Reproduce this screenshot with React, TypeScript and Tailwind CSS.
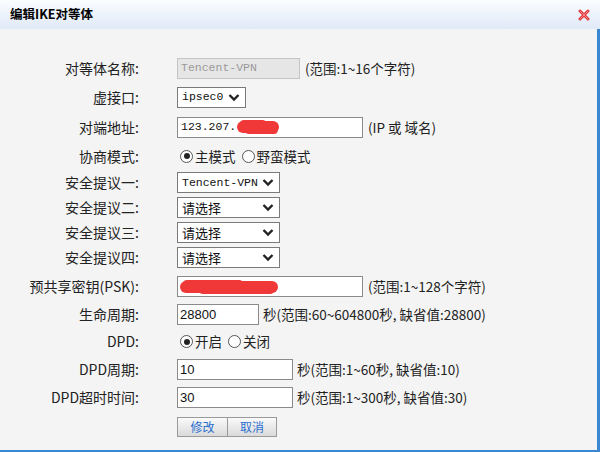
import React from "react";

const cjk = { fontFamily: '"Noto Sans CJK SC", "Liberation Sans", sans-serif' };
const mono = { fontFamily: '"Liberation Mono", "Noto Sans CJK SC", monospace' };
const sans = { fontFamily: '"Liberation Sans", "Noto Sans CJK SC", sans-serif' };

function Chevron() {
	return (
		<svg width="12" height="9" viewBox="0 0 12 9" className="shrink-0">
			<polyline points="1.5,2 6,6.5 10.5,2" fill="none" stroke="#222" strokeWidth="2.4" />
		</svg>
	);
}

function Select({ value, width, isMono }: { value: string; width: string; isMono?: boolean }) {
	return (
		<div
			className={`flex h-[21px] items-center justify-between border border-[#7a7a7a] bg-white pl-[4px] pr-[5px] text-[13px] text-[#111] ${width}`}
		>
			<span style={isMono ? { ...mono, fontSize: "11.5px" } : cjk}>{value}</span>
			<Chevron />
		</div>
	);
}

function Radio({ checked, label }: { checked?: boolean; label: string }) {
	return (
		<label className="flex items-center gap-[2px]">
			<span className="flex h-[13px] w-[13px] items-center justify-center rounded-full border border-[#555] bg-white">
				{checked && <span className="h-[6px] w-[6px] rounded-full bg-[#222]" />}
			</span>
			<span className="text-[13.5px] text-[#222]">{label}</span>
		</label>
	);
}

// red marker strokes that hide the address and the key
function Scribble({ w }: { w: number }) {
	return (
		<svg width={w} height="16" viewBox={`0 0 ${w} 16`} className="block shrink-0">
			<rect x="1" y="2" width={w - 2} height="12" rx="6" fill="#f03838" />
			<rect x="4" y="1" width={w * 0.6} height="8" rx="4" fill="#f03838" />
			<rect x={w * 0.2} y="7" width={w * 0.75} height="8" rx="4" fill="#f03838" />
		</svg>
	);
}

function Row({ label, h, children }: { label: string; h: string; children: React.ReactNode }) {
	return (
		<div className={`flex items-center ${h}`}>
			<div className="w-[139px] text-right text-[14px] text-[#222]">{label}</div>
			<div className="ml-[38px] flex items-center">{children}</div>
		</div>
	);
}

function Hint({ children, ml = "ml-[5px]" }: { children: React.ReactNode; ml?: string }) {
	return <span className={`${ml} text-[13.5px] text-[#222]`}>{children}</span>;
}

export default function App() {
	return (
		<div className="h-[452px] w-[600px] overflow-hidden bg-[#f4f4f4]" style={cjk}>
			<div className="flex h-[29px] items-center justify-between bg-gradient-to-b from-[#fbfdff] to-[#dfe9f7] pl-[10px] pr-[10px]">
				<span className="text-[12.5px] font-bold text-[#000]">编辑IKE对等体</span>
				<svg width="12" height="12" viewBox="0 0 12 12" className="mt-[1px]">
					<path d="M2 2 L10 10 M10 2 L2 10" stroke="#e2383a" strokeWidth="3" strokeLinecap="round" />
					<path d="M2 2 L10 10 M10 2 L2 10" stroke="#f58a8a" strokeWidth="1" strokeLinecap="round" />
				</svg>
			</div>
			<div className="h-[423px] border-b-[2px] border-r-[3px] border-[#3a87d4] pt-[25px]">
				<Row label="对等体名称:" h="h-[28px]">
					<div className="flex h-[21px] w-[123px] items-center border border-[#c4c4c4] bg-[#e6e6e6] pl-[3px] text-[11.5px] text-[#9a9a9a]" style={mono}>
						Tencent-VPN
					</div>
					<Hint>(范围:1~16个字符)</Hint>
				</Row>
				<Row label="虚接口:" h="h-[30px]">
					<Select value="ipsec0" width="w-[69px]" isMono />
				</Row>
				<Row label="对端地址:" h="h-[30px]">
					<div className="flex h-[21px] w-[186px] items-center border border-[#8a8a8a] bg-white pl-[3px] text-[11.5px] text-[#111]" style={mono}>
						123.207.
						<Scribble w={44} />
					</div>
					<Hint>(IP 或 域名)</Hint>
				</Row>
				<Row label="协商模式:" h="h-[28px]">
					<div className="flex items-center gap-[6px] pl-[3px]">
						<Radio checked label="主模式" />
						<Radio label="野蛮模式" />
					</div>
				</Row>
				<Row label="安全提议一:" h="h-[25px]">
					<Select value="Tencent-VPN" width="w-[103px]" isMono />
				</Row>
				<Row label="安全提议二:" h="h-[25px]">
					<Select value="请选择" width="w-[103px]" />
				</Row>
				<Row label="安全提议三:" h="h-[25px]">
					<Select value="请选择" width="w-[103px]" />
				</Row>
				<Row label="安全提议四:" h="h-[25px]">
					<Select value="请选择" width="w-[103px]" />
				</Row>
				<Row label="预共享密钥(PSK):" h="h-[33px]">
					<div className="flex h-[21px] w-[186px] items-center border border-[#8a8a8a] bg-white pl-[1px]">
						<Scribble w={100} />
					</div>
					<Hint>(范围:1~128个字符)</Hint>
				</Row>
				<Row label="生命周期:" h="h-[23px]">
					<div className="flex h-[21px] w-[82px] items-center border border-[#8a8a8a] bg-white pl-[2px] text-[13px] text-[#111]" style={sans}>
						28800
					</div>
					<Hint ml="ml-[4px]">秒(范围:60~604800秒, 缺省值:28800)</Hint>
				</Row>
				<Row label="DPD:" h="h-[31px]">
					<div className="flex items-center gap-[6px] pl-[3px]">
						<Radio checked label="开启" />
						<Radio label="关闭" />
					</div>
				</Row>
				<Row label="DPD周期:" h="h-[25px]">
					<div className="flex h-[21px] w-[116px] items-center border border-[#8a8a8a] bg-white pl-[2px] text-[13px] text-[#111]" style={sans}>
						10
					</div>
					<Hint ml="ml-[4px]">秒(范围:1~60秒, 缺省值:10)</Hint>
				</Row>
				<Row label="DPD超时时间:" h="h-[31px]">
					<div className="flex h-[21px] w-[116px] items-center border border-[#8a8a8a] bg-white pl-[2px] text-[13px] text-[#111]" style={sans}>
						30
					</div>
					<Hint ml="ml-[4px]">秒(范围:1~300秒, 缺省值:30)</Hint>
				</Row>
				<Row label="" h="h-[27px]">
					<div className="flex">
						<button className="h-[20px] w-[51px] border border-[#9a9a9a] bg-gradient-to-b from-[#fafafa] to-[#dadada] text-[12px] text-[#2b6fd0]">
							修改
						</button>
						<button className="h-[20px] w-[49px] border border-l-0 border-[#9a9a9a] bg-gradient-to-b from-[#fafafa] to-[#dadada] text-[12px] text-[#2b6fd0]">
							取消
						</button>
					</div>
				</Row>
			</div>
		</div>
	);
}
